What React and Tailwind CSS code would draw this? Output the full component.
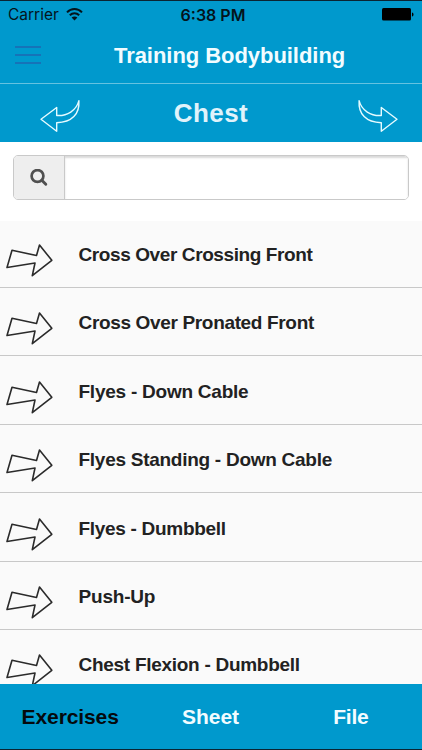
import React, { useState } from 'react';

const exercises = [
    { name: 'Cross Over Crossing Front', tracking: 'tracking-[-0.4px]' },
    { name: 'Cross Over Pronated Front', tracking: 'tracking-[-0.34px]' },
    { name: 'Flyes - Down Cable', tracking: 'tracking-[-0.24px]' },
    { name: 'Flyes Standing - Down Cable', tracking: 'tracking-[-0.27px]' },
    { name: 'Flyes - Dumbbell', tracking: 'tracking-[-0.3px]' },
    { name: 'Push-Up', tracking: 'tracking-[-0.2px]' },
    { name: 'Chest Flexion - Dumbbell', tracking: 'tracking-[-0.28px]' },
];

function StatusBar() {
    return (
        <div className="grid h-[27px] grid-cols-3 items-center px-2 font-['Inter',sans-serif] text-[16px] leading-none text-[#04141c]">
            <div className="flex items-center gap-[7px]">
                <span className="text-[15.5px] font-normal">Carrier</span>
                <svg width="17" height="13" viewBox="0 0 17 13" fill="none" stroke="currentColor" strokeWidth="2">
                    <path d="M1 4.4C5.2 0 11.8 0 16 4.4" />
                    <path d="M3.8 7.3c2.8-2.8 6.6-2.8 9.4 0" />
                    <path d="M8.5 12.5 5.6 9.6c1.7-1.6 4.1-1.6 5.8 0z" fill="currentColor" stroke="none" />
                </svg>
            </div>
            <span className="pl-[4px] text-center font-semibold whitespace-nowrap">6:38 PM</span>
            <svg className="justify-self-end" width="32" height="13" viewBox="0 0 32 13" fill="black">
                <rect width="29" height="12.5" rx="1.5" />
                <path d="M30 4.5c2 .6 2 3.4 0 4z" />
            </svg>
        </div>
    );
}

function CurvedArrow({ flip }) {
    return (
        <svg
            className={flip ? '-scale-x-100' : ''}
            width="41"
            height="34"
            viewBox="10 9 41 34"
            fill="none"
            stroke="#e6fbff"
            strokeWidth="1.4"
            strokeLinejoin="round"
        >
            <path d="M11 29.3 26.7 17.5V25.5C37 26.2 46.5 20.5 48.9 10.7C49.8 24 42 32.4 26.7 32.7V41.2Z" />
        </svg>
    );
}

function RowArrow() {
    return (
        <svg width="48" height="34" viewBox="5 8 48 34" fill="none" stroke="#2b2b2b" strokeWidth="1.6" strokeLinejoin="round">
            <path d="M12 15.3 36.5 20.5 39.5 10 51.8 25.3 32.3 40.7 35 28 7 32.5Z" />
        </svg>
    );
}

export default function App() {
    const [search, setSearch] = useState('');

    return (
        <div className="flex h-[750px] w-full flex-col overflow-hidden bg-white font-['Liberation_Sans',sans-serif] font-bold">
            <header className="h-[84px] shrink-0 border-t border-b border-t-[#0b2433] border-b-[#66c2e0] bg-[#0099cd]">
                <StatusBar />
                <div className="flex h-[54px] items-center">
                    <button className="ml-[15px] flex w-[26px] flex-col gap-[6px]" aria-label="Menu">
                        <span className="h-[2px] w-full bg-[#1673b8]" />
                        <span className="h-[2px] w-full bg-[#1673b8]" />
                        <span className="h-[2px] w-full bg-[#1673b8]" />
                    </button>
                    <h1 className="ml-[73px] pt-[2px] text-[22px] leading-none tracking-[-0.05px] whitespace-nowrap text-[#f2fcff]">Training Bodybuilding</h1>
                </div>
            </header>

            <div className="grid h-[58px] shrink-0 grid-cols-3 items-center bg-[#0099cd] px-[24px]">
                <button className="justify-self-start pt-[6px] pl-[16px]" aria-label="Previous"><CurvedArrow /></button>
                <h2 className="text-center text-[26px] leading-none tracking-[0.4px] text-[#e0f3fb]">Chest</h2>
                <button className="justify-self-end pt-[6px]" aria-label="Next"><CurvedArrow flip /></button>
            </div>

            <div className="h-[79px] shrink-0 px-[13px] pt-[13px]">
                <div className="flex h-[45px] overflow-hidden rounded-[5px] border border-[#c9c9c9]">
                    <span className="flex w-[51px] items-center justify-center border-r border-[#c9c9c9] bg-[#eeeeee]">
                        <svg width="18" height="18" viewBox="0 0 18 18" fill="none" stroke="#505050">
                            <circle cx="7.5" cy="7" r="5.9" strokeWidth="2.7" />
                            <path d="m11.8 11.3 4 4" strokeWidth="2.9" strokeLinecap="round" />
                        </svg>
                    </span>
                    <input
                        className="min-w-0 flex-1 bg-white px-3 text-lg font-normal shadow-[inset_0_2px_2px_rgba(0,0,0,0.15)] outline-none"
                        value={search}
                        onChange={(e) => setSearch(e.target.value)}
                    />
                </div>
            </div>

            <ul className="min-h-0 flex-1 overflow-hidden bg-[#fafafa]">
                {exercises.map((exercise, i) => (
                    <li key={exercise.name} className={`flex border-b border-[#c8c8c8] pl-[5px] ${i === 0 ? 'h-[67px]' : 'h-[68.4px]'}`}>
                        <span className={i === 0 ? 'pt-[22px]' : 'pt-[23.4px]'}><RowArrow /></span>
                        <span className={`ml-[25.5px] text-[19px] leading-[22px] whitespace-nowrap text-[#222222] ${exercise.tracking} ${i === 0 ? 'pt-[23px]' : 'pt-[24.4px]'}`}>
                            {exercise.name}
                        </span>
                    </li>
                ))}
            </ul>

            <nav className="grid h-[66px] shrink-0 grid-cols-3 items-center border-b border-[#0b2433] bg-[#0099cd] pr-[1px] text-center text-[21px] leading-none text-[#f2fcff]">
                <button className="tracking-[-0.1px] text-[#050a0d]">Exercises</button>
                <button>Sheet</button>
                <button className="tracking-[-0.2px]">File</button>
            </nav>
        </div>
    );
}
